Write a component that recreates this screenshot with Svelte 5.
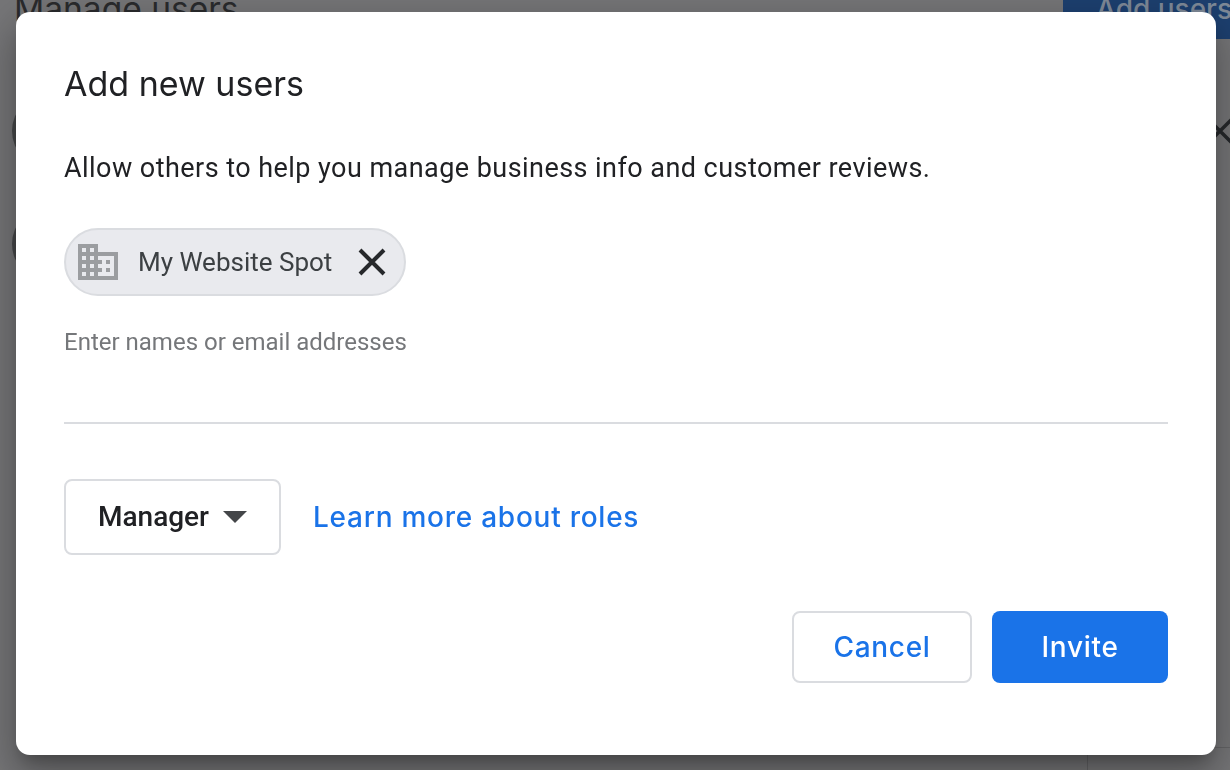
<script lang="ts">
	const title = 'Add new users';
	const intro = 'Allow others to help you manage business info and customer reviews.';
</script>

<div class="page">
	<header class="page-head">
		<h1>Manage users</h1>
		<span class="add-btn">Add users</span>
	</header>
	<div class="user-row">
		<span class="avatar"></span>
		<svg class="row-x" width="28" height="28" viewBox="0 0 28 28" aria-hidden="true">
			<path d="M2 2L26 26M26 2L2 26" stroke="#26282b" stroke-width="3.5" fill="none" />
		</svg>
	</div>
	<div class="user-row"><span class="avatar"></span></div>
	<div class="table-foot"><span class="foot-cell"></span></div>
</div>

<div class="overlay">
	<div class="dialog" role="dialog" aria-label={title}>
		<h2>{title}</h2>
		<p class="intro">{intro}</p>

		<div class="chip">
			<svg class="building" width="40" height="36" viewBox="2 3 20 18" aria-hidden="true">
				<path fill="#9b9da0" d="M12 7V3H2v18h20V7H12zM6 19H4v-2h2v2zm0-4H4v-2h2v2zm0-4H4V9h2v2zm0-4H4V5h2v2zm4 12H8v-2h2v2zm0-4H8v-2h2v2zm0-4H8V9h2v2zm0-4H8V5h2v2zm10 12h-8v-2h2v-2h-2v-2h2v-2h-2V9h8v10zm-2-8h-2v2h2v-2zm0 4h-2v2h2v-2z" />
			</svg>
			<span class="chip-label">My Website Spot</span>
			<svg class="chip-x" width="28" height="28" viewBox="0 0 28 28" aria-hidden="true">
				<path d="M2 2L26 26M26 2L2 26" stroke="#26282b" stroke-width="4" fill="none" />
			</svg>
		</div>

		<div class="field">Enter names or email addresses</div>

		<div class="role-row">
			<button class="role">
				<span>Manager</span>
				<svg width="24" height="12" viewBox="0 0 24 12" aria-hidden="true"><path d="M0 0H24L12 12Z" fill="#444649" /></svg>
			</button>
			<span class="link">Learn more about roles</span>
		</div>

		<div class="actions">
			<button class="btn cancel">Cancel</button>
			<button class="btn invite">Invite</button>
		</div>
	</div>
</div>

<style>
	:global(body) {
		margin: 0;
		overflow: hidden;
		background: #767678;
		font-family: Roboto, "Liberation Sans", sans-serif;
	}

	.page {
		display: flex;
		flex-direction: column;
		height: 770px;
		background: #767678;
		overflow: hidden;
	}

	.page-head {
		display: flex;
		justify-content: space-between;
		flex: none;
		margin-top: -21px;
		padding-left: 14px;
		height: 95px;
	}

	h1 {
		margin: 0;
		font: 400 33.5px/60px Inter, sans-serif;
		color: #2a2b2d;
	}

	.add-btn {
		width: 167px;
		height: 60px;
		padding-left: 33px;
		box-sizing: border-box;
		background: #1d4070;
		color: #7f8a98;
		font: 500 28px/60px Inter, sans-serif;
		white-space: nowrap;
		overflow: hidden;
	}

	.user-row {
		display: flex;
		flex: none;
		justify-content: space-between;
		align-items: center;
		height: 113px;
		padding-left: 12px;
	}

	.avatar {
		width: 76px;
		height: 76px;
		border-radius: 50%;
		background: #47484a;
	}

	.row-x {
		margin-right: -4px;
	}

	.table-foot {
		display: flex;
		justify-content: flex-end;
		margin-top: auto;
		height: 23px;
	}

	.foot-cell {
		width: 142px;
		border-top: 1px solid rgba(0, 0, 0, 0.14);
		border-left: 1px solid rgba(0, 0, 0, 0.14);
	}

	.overlay {
		position: fixed;
		inset: 0;
		padding: 12px 14px 15px 16px;
		box-sizing: border-box;
	}

	.dialog {
		height: 100%;
		box-sizing: border-box;
		padding: 52px 48px 0;
		background: #fff;
		border-radius: 14px;
		color: #202124;
		box-shadow: 0 11px 15px -7px rgba(0, 0, 0, 0.26), 0 24px 38px 3px rgba(0, 0, 0, 0.18), 0 9px 46px 8px rgba(0, 0, 0, 0.14);
	}

	h2 {
		margin: 0;
		font: 400 34px/40px Inter, sans-serif;
	}

	.intro {
		margin: 46px 0 0;
		font-size: 27px;
		line-height: 36px;
		letter-spacing: 0.45px;
	}

	.chip {
		display: inline-flex;
		align-items: center;
		box-sizing: border-box;
		width: 342px;
		height: 68px;
		margin-top: 42px;
		padding-left: 12px;
		background: #e9eaee;
		border: 2px solid #dadce0;
		border-radius: 34px;
	}

	.chip-label {
		margin-left: 20px;
		font-size: 26px;
		color: #3c4043;
	}

	.chip-x {
		margin-left: 26px;
	}

	.field {
		height: 96px;
		margin-top: 30px;
		border-bottom: 2px solid #dadce0;
		font-size: 24px;
		line-height: 32px;
		color: #75777a;
	}

	.role-row {
		display: flex;
		align-items: center;
		gap: 32px;
		margin-top: 55px;
	}

	.role {
		display: flex;
		align-items: center;
		justify-content: center;
		gap: 14px;
		width: 217px;
		height: 76px;
		padding-bottom: 2px;
		background: #fff;
		border: 2px solid #dadce0;
		border-radius: 8px;
		font: 500 28px Roboto, sans-serif;
		color: #202124;
	}

	.link {
		font: 500 28px Inter, sans-serif;
		letter-spacing: 0.75px;
		color: #1a73e8;
	}

	.actions {
		display: flex;
		justify-content: flex-end;
		gap: 20px;
		margin-top: 56px;
	}

	.btn {
		height: 72px;
		border-radius: 8px;
		font: 500 28px Inter, sans-serif;
		letter-spacing: 0.7px;
	}

	.cancel {
		width: 180px;
		background: #fff;
		border: 2px solid #dadce0;
		color: #1a73e8;
	}

	.invite {
		width: 176px;
		background: #1a73e8;
		border: none;
		color: #fff;
	}
</style>
